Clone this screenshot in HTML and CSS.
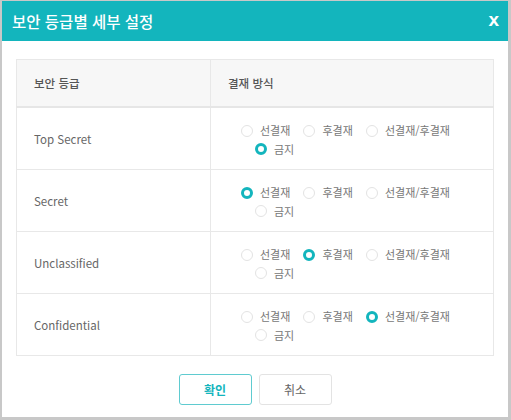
FILE: index.html
```html
<!DOCTYPE html>
<html lang="ko">
<head>
<meta charset="utf-8">
<link rel="stylesheet" href="styles.css">
</head>
<body>
<div class="dialog">
  <div class="dlg-head">
    <h1 class="dlg-title">보안 등급별 세부 설정</h1>
    <span class="dlg-close">x</span>
  </div>
  <div class="dlg-body">
    <table class="grade-table">
      <thead>
        <tr><th class="col-grade">보안 등급</th><th class="col-method">결재 방식</th></tr>
      </thead>
      <tbody>
        <tr>
          <td class="grade">Top Secret</td>
          <td class="method"><div class="opts">
            <span class="opt"><i class="radio"></i>선결재</span>
            <span class="opt"><i class="radio"></i>후결재</span>
            <span class="opt"><i class="radio"></i>선결재/후결재</span>
            <span class="opt"><i class="radio on"></i>금지</span>
          </div></td>
        </tr>
        <tr>
          <td class="grade">Secret</td>
          <td class="method"><div class="opts">
            <span class="opt"><i class="radio on"></i>선결재</span>
            <span class="opt"><i class="radio"></i>후결재</span>
            <span class="opt"><i class="radio"></i>선결재/후결재</span>
            <span class="opt"><i class="radio"></i>금지</span>
          </div></td>
        </tr>
        <tr>
          <td class="grade">Unclassified</td>
          <td class="method"><div class="opts">
            <span class="opt"><i class="radio"></i>선결재</span>
            <span class="opt"><i class="radio on"></i>후결재</span>
            <span class="opt"><i class="radio"></i>선결재/후결재</span>
            <span class="opt"><i class="radio"></i>금지</span>
          </div></td>
        </tr>
        <tr>
          <td class="grade">Confidential</td>
          <td class="method"><div class="opts">
            <span class="opt"><i class="radio"></i>선결재</span>
            <span class="opt"><i class="radio"></i>후결재</span>
            <span class="opt"><i class="radio on"></i>선결재/후결재</span>
            <span class="opt"><i class="radio"></i>금지</span>
          </div></td>
        </tr>
      </tbody>
    </table>
    <div class="actions">
      <button class="btn btn-ok">확인</button>
      <button class="btn btn-cancel">취소</button>
    </div>
  </div>
</div>
</body>
</html>
```
FILE: styles.css
```css
html, body { margin: 0; padding: 0; }
body {
  background: #c8c8c8;
  font-family: "Noto Sans CJK KR", "Noto Sans", sans-serif;
  width: 511px;
  height: 420px;
  overflow: hidden;
}
.dialog {
  margin: 1px 3px 0 2px;
  height: 416px;
  background: #fff;
  display: flex;
  flex-direction: column;
}
.dlg-head {
  height: 40px;
  background: #13b5bd;
  display: flex;
  align-items: center;
  justify-content: space-between;
  padding: 0 9px 0 10px;
}
.dlg-title {
  margin: 0;
  font-size: 15.5px;
  font-weight: 500;
  color: #fff;
}
.dlg-close {
  color: #fff;
  font-family: "Liberation Sans", sans-serif;
  font-weight: 700;
  font-size: 19px;
  line-height: 1;
  margin-top: -3px;
}
.dlg-body {
  padding: 18px 14px 0 14px;
}
.grade-table {
  width: 478px;
  border-collapse: collapse;
  table-layout: fixed;
  font-size: 11.5px;
  color: #666;
}
.grade-table th, .grade-table td {
  border: 1px solid #e8e8e8;
  text-align: left;
  padding: 0 0 0 17px;
}
.grade-table th {
  background: #f7f7f7;
  height: 46px;
  font-weight: 500;
  color: #555;
  border-bottom: 2px solid #e6e6e6;
}
.col-grade { width: 176px; }
.grade-table td { height: 61px; }
.grade-table td.method { padding: 0; }
.opts {
  padding: 4px 0 0 44px;
  text-indent: -14px;
  line-height: 17px;
  font-size: 11px;
  color: #777;
}
.opt {
  display: inline-flex;
  align-items: center;
  text-indent: 0;
  margin-right: 10px;
  white-space: nowrap;
}
.radio {
  width: 12px;
  height: 12px;
  box-sizing: border-box;
  border: 1px solid #e3e3e3;
  border-radius: 50%;
  background: #fff;
  margin-right: 7px;
}
.radio.on {
  border: 3.5px solid #13b5bd;
}
.actions {
  display: flex;
  justify-content: center;
  gap: 7px;
  margin-top: 18px;
}
.btn {
  width: 73px;
  height: 31px;
  border-radius: 3px;
  background: #fff;
  font-family: "Noto Sans CJK KR", sans-serif;
  font-size: 12px;
  cursor: pointer;
}
.btn-ok {
  border: 1px solid #5fcbd0;
  color: #13b5bd;
  font-weight: 700;
}
.btn-cancel {
  border: 1px solid #e3e3e3;
  color: #666;
}
```
